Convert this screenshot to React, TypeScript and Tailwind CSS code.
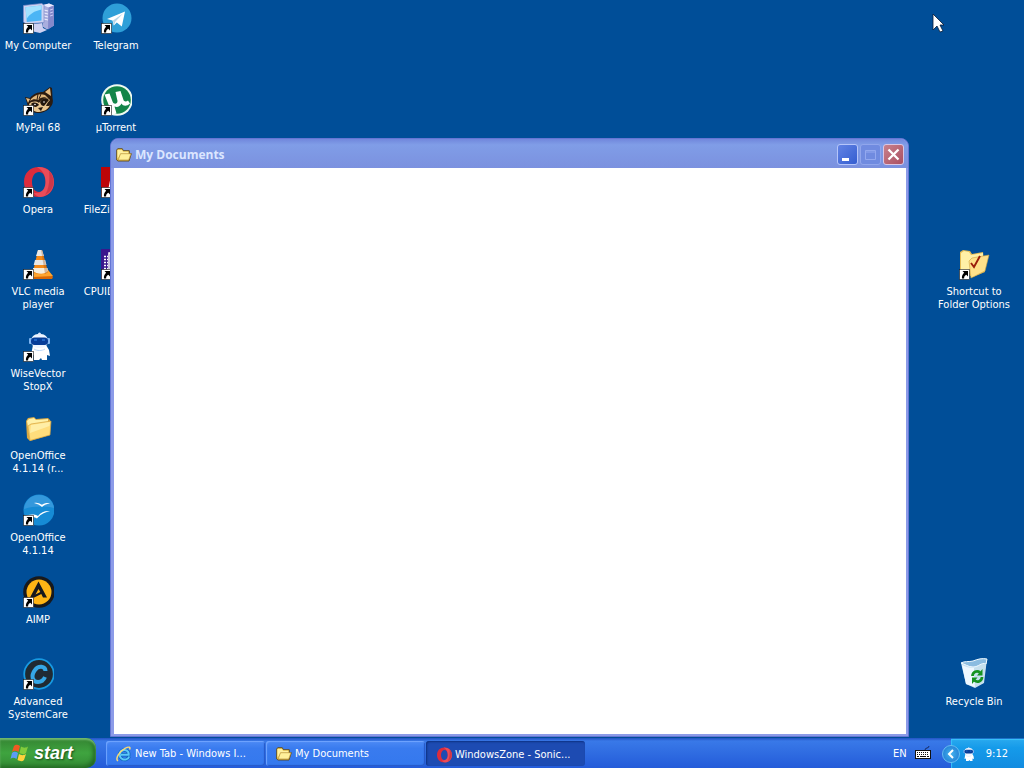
import type { ReactNode } from "react";

function ShortcutArrow() {
  return (
    <g>
      <rect x="1.5" y="21.5" width="10" height="10" fill="#fff" stroke="#1b1b1b" strokeWidth="0.6" />
      <path d="M4.500 23h5.500v5.500l-1.700-1.700c-1.700 1-2.200 2-2.200 3.700H4c-.4-2.300.4-4 2.200-5.800z" fill="#000" />
    </g>
  );
}

function Glyph({ children, shortcut = true }: { children: ReactNode; shortcut?: boolean }) {
  return (
    <svg viewBox="0 0 32 32" className="h-8 w-8 shrink-0" aria-hidden="true">
      {children}
      {shortcut && <ShortcutArrow />}
    </svg>
  );
}

function ComputerIcon() {
  return (
    <Glyph>
      <path d="M21 3l6-1.500 5 2v20l-7 4-4.500-3z" fill="#a9aede" />
      <path d="M21 3l6-1.500 5 2-5.500 2z" fill="#e9eaff" />
      <path d="M26.500 5.500l5.500-2v20l-6 4z" fill="#8489cb" />
      <path d="M22 8l4 1m-4 2l4 1m-4 2l4 1m-4 2l4 1" stroke="#eef" strokeWidth="1" />
      <path d="M28 8l3-1m-3 4l3-1m-3 4l3-1" stroke="#c7caf4" />
      <path d="M12 22l8-1 1 5 4 2-7 3-9-2 3-2z" fill="#cfd2f3" />
      <path d="M1.500 3.500L20 1.500l2 2v17L4 22l-2.500-2z" fill="#cdd3f2" stroke="#7d8ac8" strokeWidth=".7" />
      <path d="M3.500 5.300L19.500 3.500v15L4.800 20z" fill="#4cb5f5" />
      <path d="M3.500 5.300L19.500 3.500v4C12 9 8 12 4.500 17z" fill="#a2e1ff" />
    </Glyph>
  );
}

function TelegramIcon() {
  return (
    <Glyph>
      <circle cx="17" cy="16" r="14.500" fill="#2e9fd8" />
      <path d="M7 17L25 9.500l-3.200 15-5-4-3 3-1.300-5z" fill="#fff" />
      <path d="M13 18.500L23 11.500l-7.500 8-1.700 4z" fill="#b6d6e8" />
    </Glyph>
  );
}

function MyPalIcon() {
  return (
    <Glyph>
      <path d="M5 19l-2-6 5 1c3-4 8-6 13-6l7-5 2 1 .5 10c1 4 0 7-2 9-3 4-8 6-13 6-6 0-9.500-4-10.500-10z" fill="#2b1b10" />
      <path d="M4 14l4 1-2 4zM23 8l5-4 1 8z" fill="#e7bd82" />
      <path d="M9 15c4-4 9-6 14-4l4 4c-5-3-8-2-11 1-3-1-5-1-8 1z" fill="#dfb67b" />
      <path d="M7 20c3-3 7-3 10-1 3-5 8-6 11-3-1 1-3 3-4 6 2 0 4 0 4-1-2 5-7 7-13 7-4-1-7-3-8-8z" fill="#e8c58f" />
      <path d="M9 20c3-3 7-1 8 1l-3 2c-2 0-4-1-5-3zM18 18c2-4 6-5 9-2l-5 6c-2 0-3-1-4-4zM16 24l5-1-2 4z" fill="#21150d" />
      <circle cx="13" cy="20.500" r=".8" fill="#fff" />
      <circle cx="22" cy="18" r=".8" fill="#fff" />
      <path d="M16 10l-1 6m4-6l-2 5" stroke="#2b1b10" />
    </Glyph>
  );
}

function TorrentIcon() {
  return (
    <Glyph>
      <circle cx="17" cy="16" r="15.800" fill="#effaf1" />
      <circle cx="17" cy="16" r="13.800" fill="#138548" />
      <path d="M4.500 10.500l5-1 3 8c1 3 5 3 5-.5L15.500 8l5-1 3 9c.8 2 3 1.500 4.500.5l2 3c-3 3-7 3-8.500 0-1.500 3-4 4-7 3l2 7-4 1z" fill="#fff" />
    </Glyph>
  );
}

function OperaRing() {
  return (
    <>
      <path fillRule="evenodd" d="M17 1C8 1 2 7 2 16s6 15 15 15 15-6 15-15S26 1 17 1zm0 5c4 0 6.500 4 6.500 10s-2.500 10-6.500 10-7-4-7-10S13 6 17 6z" fill="#dc2c3c" />
      <path d="M15 1.200C24 0 32 7 32 16c0 8-6 14-13 15-3 0-6-2-7-4 8 1 11.500-5 11.500-11C23.500 8 20 4 15 1.200z" fill="#f4626c" opacity=".6" />
      <path d="M27 5c7 7 6 19-4 24 4-6 5-15 4-24z" fill="#ad2036" opacity=".45" />
    </>
  );
}

function VlcIcon() {
  return (
    <Glyph>
      <path d="M6 24l20-2 5 7-1 2H5z" fill="#d96806" />
      <path d="M6 23l20-1 5 6-20 1z" fill="#ffa52e" />
      <path d="M16 2h4l6 22c-3 3-12 3-15 0z" fill="#f58a18" />
      <path d="M16 2h4l2 6h-8zM13 12h10.200l1.300 5H11.700z" fill="#e9e9e7" />
      <path d="M11 20h14.500l.5 3c-3 4-12 3-15 0z" fill="#f7eedc" />
      <path d="M19 2h1l6 22-3 2z" fill="#9d4c0b" opacity=".32" />
    </Glyph>
  );
}

function RobotDrawing() {
  return (
    <>
      <path d="M11 15h13l3 5 1 6-3-1v5h-5l-1-2-2 2h-5v-5l-3 1 1-6z" fill="#fff" />
      <rect x="9" y="4" width="17" height="14" rx="7" fill="#eef5ff" />
      <circle cx="17.500" cy="4" r="1.500" fill="#dce9ff" />
      <rect x="7" y="8" width="3" height="6" rx="1" fill="#7eb4f1" />
      <rect x="25" y="8" width="3" height="6" rx="1" fill="#7eb4f1" />
      <rect x="9" y="7.500" width="17" height="7.500" rx="3.500" fill="#063d98" />
      <path d="M12 10h3m5 0h3" stroke="#1e65c5" strokeWidth="2" />
      <path d="M12 19c3 2 8 2 11 0" stroke="#bdd8f8" fill="none" />
    </>
  );
}

function FolderDrawing() {
  return (
    <>
      <path d="M4 9l2-3 6-1 2 2 12-1 2 2v15L8 29l-3-3z" fill="#d9a843" />
      <path d="M5 9l2-2 5-1 2 2 12-1v16L8 28z" fill="#fff1a8" />
      <path d="M6 14l3-2 20-3-1 14L8 28.500z" fill="#ffdd7c" stroke="#d5a23d" strokeWidth=".7" />
      <path d="M9 13l19-3-.5 4L8 21z" fill="#fff2b0" opacity=".8" />
    </>
  );
}

function OpenOfficeIcon() {
  return (
    <Glyph>
      <circle cx="17" cy="16" r="15.500" fill="#168bd5" />
      <path d="M2 15C3 7 9 1 17 1c8 0 14 6 15 13-9-2-20-2-30 1z" fill="#3498dc" />
      <path d="M12 9c3-.7 5 0 8 1.700 2-1.500 5-2.200 8-1.500-4 .8-6 2-8 3.800-2-2-5-3.300-8-4zM2 23c5-3 10-3 14-1 3-4 7-5.500 12-5-7 2-10 4-13 7.500-3-2-7-2.500-12-1z" fill="#fff" />
    </Glyph>
  );
}

function AimpIcon() {
  return (
    <Glyph>
      <circle cx="17" cy="16" r="15.800" fill="#17191d" />
      <circle cx="17" cy="16" r="12.500" fill="#ffb515" />
      <path fillRule="evenodd" d="M16.500 5.500L25 21.500h-4l-1.700-3.500-7 3.500H8zm0 7.500l-3 5.500 4.800-2.400z" fill="#17191d" />
    </Glyph>
  );
}

function SystemCareIcon() {
  return (
    <Glyph>
      <circle cx="17" cy="16" r="14.800" fill="#202a32" stroke="#179ae2" strokeWidth="1.800" />
      <path d="M23.500 13c0-5-7-6-10.500-1-4.500 6-2.500 12 3 12 3.500 0 5.500-1.500 7-5" fill="none" stroke="#35a7e6" strokeWidth="4" />
    </Glyph>
  );
}

function FileZillaIcon() {
  return (
    <Glyph>
      <rect x="1" y="1" width="30" height="30" fill="#bd0507" />
      <path d="M12 4h15l-1 5h-9l-1 5h8l-1 5h-8l-2 11H7z" fill="#fff" />
    </Glyph>
  );
}

function CpuIcon() {
  return (
    <Glyph>
      <rect x="1" y="1" width="30" height="30" fill="#3a168d" />
      <path d="M4 8.500h4m-4 3h4m-4 3h4m-4 3h4m-4 3h4" stroke="#fff" strokeWidth="1.300" strokeDasharray="2 1" />
      <rect x="9" y="5" width="16" height="20" fill="none" stroke="#fff" strokeWidth="1.500" />
    </Glyph>
  );
}

function FolderOptionsIcon() {
  return (
    <Glyph>
      <path d="M2 4l3-2 7 1 2 3 11-2 2 20-12 5L2 23z" fill="#e4bc55" />
      <path d="M3 5l3-2 5 1 2 3 12-2v17l-10 5-12-5z" fill="#fff0a6" />
      <path d="M11 13l3-3 17-3-4 16-14 7z" fill="#ffe18a" stroke="#cda13e" strokeWidth=".6" />
      <path d="M13 15l3 4 6-11" fill="none" stroke="#9b1d0b" strokeWidth="1.900" />
    </Glyph>
  );
}

function RecycleIcon() {
  return (
    <Glyph shortcut={false}>
      <path d="M3 5l13 2 13-6-3 24-9 5-9-4z" fill="#c8e1f2" />
      <path d="M3 5c3-2 8-1 12-2 5-2 9-3 14-2l-1 5c-5-2-7 3-13 3-5 0-8-3-12-4z" fill="#8bbce0" stroke="#f0faff" />
      <path d="M4 7c4 2 7 3 12 3l1 19-9-3z" fill="#eef8ff" />
      <path d="M16 10c5 0 8-5 12-4l-3 19-8 4z" fill="#c6e0ed" />
      <g fill="none" stroke="#159320" strokeWidth="2.700">
        <path d="M14.500 18c0-4 4.500-6 7.500-3.500" />
        <path d="M24 19c0 4-4.500 6-7.500 3.500" />
      </g>
      <path d="M24.500 11v6.500H19zM14 26v-6.500h5.500z" fill="#159320" />
    </Glyph>
  );
}

function SmallFolder() {
  return (
    <svg viewBox="0 0 16 16" className="h-4 w-4 shrink-0" aria-hidden="true">
      <path d="M.7 3l1-1.300h4.600l1 2h6v3h2L13 14H2L.7 13z" fill="#f3cd52" stroke="#5a461b" strokeWidth=".9" />
      <path d="M1.500 3h4.500l1 1.700h5.300v2H4.500l-3 5z" fill="#fff1a0" />
      <path d="M4.500 6.700H15L12.700 13H2.200z" fill="#fff09a" stroke="#ad8732" strokeWidth=".6" />
    </svg>
  );
}

function IeIcon() {
  return (
    <svg viewBox="0 0 16 16" className="h-4 w-4 shrink-0" aria-hidden="true">
      <path d="M13.200 10.500c-1 3-4.500 3.800-7 2.500-3.500-2-3-7 0-8.500C9.500 3 13 5 12.700 8.700H5" fill="none" stroke="#0d65b8" strokeWidth="3.400" />
      <path d="M13.200 10.500c-1 3-4.500 3.800-7 2.500-3.500-2-3-7 0-8.500C9.500 3 13 5 12.700 8.700H5" fill="none" stroke="#5cc8fa" strokeWidth="2" />
      <path d="M2 15C-1 13 3 5.500 9 2.300c4-2 6-1.300 4.500 1.200" fill="none" stroke="#f6d979" strokeWidth="1.500" />
    </svg>
  );
}

function WindowsFlag() {
  return (
    <svg viewBox="0 0 20 20" className="h-5 w-5 shrink-0" aria-hidden="true">
      <path d="M4 3c2-2 4-1 6 0L8.500 9c-2-1-4-2-6.500 0z" fill="#f05a22" />
      <path d="M11 3.500c2 1 4 2 7 0L16 10c-2 2-4 1-6.500 0z" fill="#82cc3c" />
      <path d="M2 10c2-2 4-1 6 0l-1.500 6c-2-1-4-2-6 0z" fill="#5b9cf4" />
      <path d="M9 11c2 1 4 2 7 0l-2 6c-2 2-4 1-6.500 0z" fill="#ffd23c" />
    </svg>
  );
}

function DesktopItem({ label, icon }: { label: string; icon: ReactNode }) {
  return (
    <button type="button" className="flex w-[76px] flex-col items-center gap-[5px] whitespace-pre text-center text-[11px] leading-[13px] text-white">
      {icon}
      <span>{label}</span>
    </button>
  );
}

const items: { label: string; icon: ReactNode }[] = [
  { label: "My Computer", icon: <ComputerIcon /> },
  { label: "MyPal 68", icon: <MyPalIcon /> },
  { label: "Opera", icon: <Glyph><OperaRing /></Glyph> },
  { label: "VLC media\nplayer", icon: <VlcIcon /> },
  { label: "WiseVector\nStopX", icon: <Glyph><RobotDrawing /></Glyph> },
  { label: "OpenOffice\n4.1.14 (r...", icon: <Glyph shortcut={false}><FolderDrawing /></Glyph> },
  { label: "OpenOffice\n4.1.14", icon: <OpenOfficeIcon /> },
  { label: "AIMP", icon: <AimpIcon /> },
  { label: "Advanced\nSystemCare", icon: <SystemCareIcon /> },
  { label: "Telegram", icon: <TelegramIcon /> },
  { label: "µTorrent", icon: <TorrentIcon /> },
  { label: "FileZilla SFTP", icon: <FileZillaIcon /> },
  { label: "CPUID CPU-Z", icon: <CpuIcon /> },
];

function DocumentsWindow() {
  return (
    <section aria-label="My Documents" className="absolute top-[138px] right-[115px] bottom-px left-[110px] flex flex-col rounded-t-lg border border-[#6475d4] bg-[#8c9be8] pr-[2px] pb-[2px] pl-[3px]">
      <header className="-mr-[2px] -ml-[3px] flex h-[29px] shrink-0 items-center gap-[3px] rounded-t-lg bg-linear-to-b from-[#7187dc] via-[#809de7] via-20% to-[#7b91df] pt-[2px] pr-1 pl-[5px]">
        <SmallFolder />
        <h1 className="flex-1 font-['Open_Sans',sans-serif] text-[12px] leading-4 font-bold text-[#dce6ff]">My Documents</h1>
        <div className="flex gap-[2px]">
          <button type="button" aria-label="Minimize" className="h-[21px] w-[21px] rounded-[3px] border border-[#b5c5fa] bg-linear-to-br from-[#6283e4] to-[#345dd0]">
            <svg viewBox="0 0 19 19" className="h-full w-full"><path d="M4 13h7v3H4z" fill="#fff" /></svg>
          </button>
          <button type="button" aria-label="Maximize" disabled className="h-[21px] w-[21px] rounded-[3px] border border-[#91a6ec] bg-[#708be0]">
            <svg viewBox="0 0 19 19" className="h-full w-full"><path d="M4.500 5.500h10v9h-10zM4 7h11" fill="none" stroke="#93a8ef" /></svg>
          </button>
          <button type="button" aria-label="Close" className="h-[21px] w-[21px] rounded-[3px] border border-[#dac6e3] bg-linear-to-br from-[#c8818c] to-[#aa4f62]">
            <svg viewBox="0 0 19 19" className="h-full w-full"><path d="M4.500 4.500l10 10m0-10l-10 10" stroke="#fff" strokeWidth="2.300" /></svg>
          </button>
        </div>
      </header>
      <div className="flex-1 bg-white" />
    </section>
  );
}

function Task({ label, icon, active = false }: { label: string; icon: ReactNode; active?: boolean }) {
  return (
    <button
      type="button"
      className={
        "flex h-[25px] w-full max-w-[159px] min-w-0 items-center gap-[3px] rounded-[3px] pl-[10px] text-[11px] leading-[13px] text-white " +
        (active
          ? "bg-[#1d4bb2] pt-[2px] shadow-[inset_1px_1px_2px_#0d3182]"
          : "bg-linear-to-b from-[#4c8af5] via-[#397bef] via-30% to-[#3478ee] shadow-[inset_1px_1px_1px_#72a6ff,inset_-1px_-1px_1px_#2658c7]")
      }
    >
      {icon}
      <span className="truncate">{label}</span>
    </button>
  );
}

function Taskbar() {
  return (
    <footer className="flex h-[30px] shrink-0 bg-linear-to-b from-[#2353c4] via-[#3979e8] via-10% to-[#245bd9]">
      <button type="button" className="mr-[10px] flex w-[96px] shrink-0 items-center gap-1 rounded-r-[10px] bg-linear-to-b from-[#348432] via-[#3fa43f] via-50% to-[#338a34] pl-[10px] font-['Liberation_Sans',sans-serif] text-[18px] leading-5 font-bold text-white italic shadow-[inset_0_2px_2px_#72b96e,inset_-3px_-2px_4px_#226923] [text-shadow:1px_1px_2px_#174c18]">
        <WindowsFlag />
        <span>start</span>
      </button>
      <nav aria-label="Open windows" className="flex min-w-0 flex-1 gap-[1px] pt-[3px]">
        <Task label="New Tab - Windows I..." icon={<IeIcon />} />
        <Task label="My Documents" icon={<SmallFolder />} />
        <Task
          active
          label="WindowsZone - Sonic..."
          icon={<svg viewBox="0 0 32 32" className="h-4 w-4 shrink-0" aria-hidden="true"><OperaRing /></svg>}
        />
      </nav>
      <div className="flex shrink-0 items-center gap-2 pr-5 text-[11px] leading-[13px] text-white">
        <span>EN</span>
        <svg viewBox="0 0 16 14" className="h-[14px] w-4" aria-hidden="true">
          <path d="M10 4c0-3 4-1 4-4" fill="none" stroke="#172b60" />
          <rect x=".5" y="4.500" width="15" height="8" fill="#fff" stroke="#111" />
          <path d="M2 6.500h12M2 8.500h12" stroke="#111" strokeDasharray="1 1" />
          <path d="M2 10.500h2m1 0h6m1 0h2" stroke="#111" />
        </svg>
      </div>
      <div className="flex shrink-0 items-center border-t border-[#1c72c9] bg-linear-to-b from-[#29a9ee] via-[#159bea] via-30% to-[#128be0] pr-4 text-white shadow-[inset_1px_1px_1px_#38c3fb]">
        <button type="button" aria-label="Show hidden icons" className="-ml-[9px] h-[18px] w-[18px] rounded-full border border-[#67bdf0] bg-radial from-[#46b4ee] to-[#1b72d0]">
          <svg viewBox="0 0 16 16" className="h-4 w-4"><path d="M10 4L6 8l4 4" fill="none" stroke="#fff" strokeWidth="2" /></svg>
        </button>
        <svg viewBox="0 0 32 32" className="h-4 w-4" aria-hidden="true"><RobotDrawing /></svg>
        <time className="ml-[10px] text-[11px] leading-[13px]">9:12</time>
      </div>
    </footer>
  );
}

export default function App() {
  return (
    <div className="flex min-h-screen flex-col overflow-hidden bg-[#004e98] font-['DejaVu_Sans_Condensed','DejaVu_Sans',sans-serif]">
      <main className="relative flex flex-1 justify-between">
        <div className="grid auto-cols-[76px] grid-flow-col grid-rows-[repeat(8,82px)_auto] content-start items-start gap-x-[2px] pt-[2px]">
          {items.map((item) => <DesktopItem key={item.label} {...item} />)}
        </div>
        <div className="flex flex-col justify-between pt-[248px] pr-3">
          <DesktopItem label={"Shortcut to\nFolder Options"} icon={<FolderOptionsIcon />} />
          <div className="h-[80px]">
            <DesktopItem label="Recycle Bin" icon={<RecycleIcon />} />
          </div>
        </div>
        <DocumentsWindow />
        <svg viewBox="0 0 12 20" className="absolute top-[13px] right-[80px] h-5 w-3" aria-hidden="true">
          <path d="M1 1v16l4-4 3 6 3-1-3-6h4z" fill="#fff" stroke="#071b35" strokeWidth=".8" />
        </svg>
      </main>
      <Taskbar />
    </div>
  );
}
